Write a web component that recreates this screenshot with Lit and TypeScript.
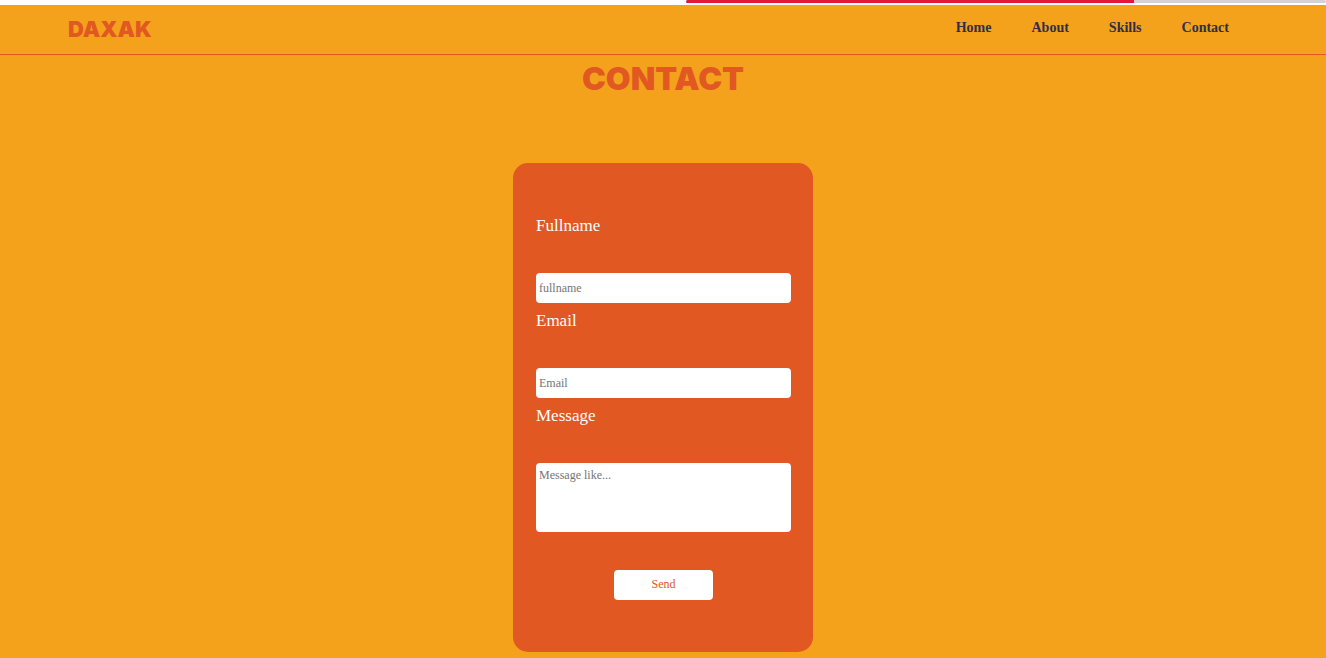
import { LitElement, html, css } from "lit";
import { customElement, property } from "lit/decorators.js";

@customElement("app-root")
export class AppRoot extends LitElement {
  @property({ type: Number }) progress = 70;

  private links = ["Home", "About", "Skills", "Contact"];

  static styles = css`
    :host {
      display: flex;
      flex-direction: column;
      min-height: 100vh;
      background: #fff;
      font-family: "Liberation Serif", "Times New Roman", serif;
    }
    * {
      box-sizing: border-box;
    }
    .top {
      display: flex;
      justify-content: flex-end;
      height: 5px;
    }
    .progress {
      appearance: none;
      display: block;
      width: 640px;
      max-width: 100%;
      height: 3px;
      border: 0;
      border-radius: 2px;
      overflow: hidden;
      background: #d3d3d3;
    }
    .progress::-webkit-progress-bar {
      background: #d3d3d3;
    }
    .progress::-webkit-progress-value {
      background: #e3173e;
    }
    .header {
      display: flex;
      justify-content: space-between;
      align-items: center;
      height: 50px;
      padding: 0 97px 2px 68px;
      background: #f4a21b;
      border-bottom: 1px solid #e15822;
    }
    .logo {
      color: #e15822;
      font: 900 22px/28px Inter, sans-serif;
      text-decoration: none;
    }
    .nav {
      display: flex;
      gap: 40px;
      padding-bottom: 2px;
    }
    .link {
      color: #2f2f4a;
      font-size: 14px;
      line-height: 16px;
      font-weight: 700;
      text-decoration: none;
    }
    .main {
      flex: 1;
      display: flex;
      flex-direction: column;
      align-items: center;
      padding-bottom: 6px;
      background: #f4a21b;
    }
    .title {
      margin: 0;
      color: #e15822;
      font: 900 32px/48px Inter, sans-serif;
    }
    .form {
      display: flex;
      flex-direction: column;
      width: 300px;
      margin-top: 60px;
      padding: 53px 22px 52px 23px;
      border-radius: 15px;
      background: #e15822;
    }
    .label {
      margin-bottom: 37px;
      color: #fff;
      font-size: 17px;
      line-height: 20px;
      font-weight: 500;
    }
    .field {
      width: 100%;
      height: 30px;
      margin: 0 0 8px;
      padding: 0 3px;
      border: 0;
      border-radius: 4px;
      background: #fff;
      color: #222;
      font: 12px/14px "Liberation Serif", "Times New Roman", serif;
    }
    .field::placeholder {
      color: #757575;
    }
    .message {
      height: 69px;
      margin: 0 0 38px;
      padding: 5px 3px;
      resize: none;
    }
    .send {
      align-self: center;
      width: 99px;
      height: 30px;
      padding: 0 0 2px;
      border: 0;
      border-radius: 4px;
      background: #fff;
      color: #e15822;
      font: 12px/14px "Liberation Serif", "Times New Roman", serif;
      cursor: pointer;
    }
  `;

  render() {
    return html`
      <div class="top">
        <progress class="progress" aria-label="Page progress" max="100" .value=${this.progress}></progress>
      </div>
      <header class="header">
        <a class="logo" href="#home">DAXAK</a>
        <nav class="nav">
          ${this.links.map((l) => html`<a class="link" href="#${l.toLowerCase()}">${l}</a>`)}
        </nav>
      </header>
      <main class="main">
        <h1 class="title">CONTACT</h1>
        <form class="form" @submit=${(e: Event) => e.preventDefault()}>
          <label class="label" for="fullname">Fullname</label>
          <input class="field" id="fullname" type="text" placeholder="fullname" />
          <label class="label" for="email">Email</label>
          <input class="field" id="email" type="email" placeholder="Email" />
          <label class="label" for="message">Message</label>
          <textarea class="field message" id="message" placeholder="Message like..."></textarea>
          <button class="send" type="submit">Send</button>
        </form>
      </main>
    `;
  }
}
